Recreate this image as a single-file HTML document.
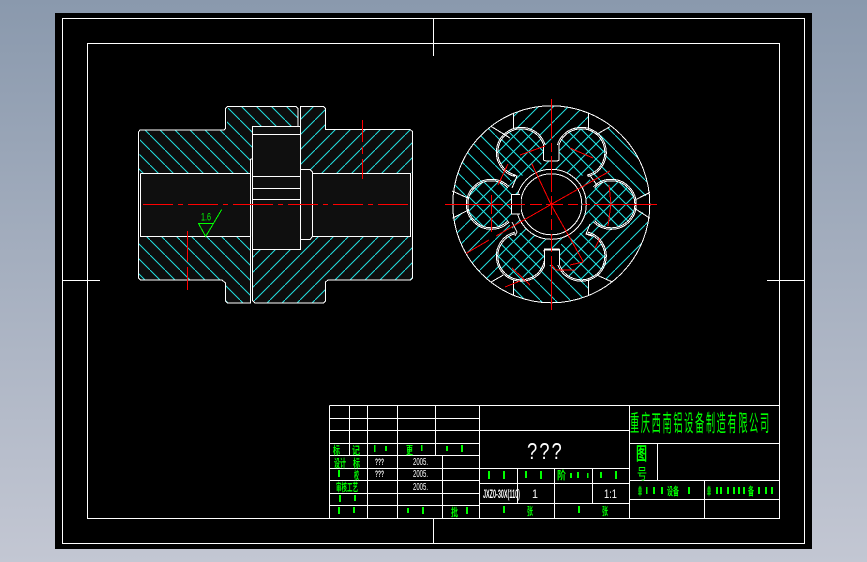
<!DOCTYPE html>
<html><head><meta charset="utf-8"><style>
html,body{margin:0;padding:0;width:867px;height:562px;overflow:hidden;background:linear-gradient(180deg,#8a99ad 0%,#c3c7d3 100%)}
svg{position:absolute;left:0;top:0}
text{font-family:"Liberation Sans","Noto Sans CJK SC",sans-serif}
</style></head><body>
<svg width="867" height="562" viewBox="0 0 867 562" xmlns="http://www.w3.org/2000/svg">
<defs>
<pattern id="b" width="15" height="15" patternUnits="userSpaceOnUse"><path d="M-1 -1L16 16" stroke="#22e0e0" stroke-width="1" fill="none"/></pattern>
<pattern id="f" width="15" height="15" patternUnits="userSpaceOnUse"><path d="M-1 16L16 -1" stroke="#22e0e0" stroke-width="1" fill="none"/></pattern>
<pattern id="cb" width="15" height="15" patternUnits="userSpaceOnUse" x="551" y="204"><path d="M-1 -1L16 16" stroke="#22e6e6" stroke-width="1" fill="none"/></pattern>
<pattern id="cf" width="15" height="15" patternUnits="userSpaceOnUse" x="551" y="204"><path d="M-1 16L16 -1" stroke="#22e6e6" stroke-width="1" fill="none"/></pattern>
<clipPath id="disc"><circle cx="551.3" cy="204.3" r="98.5"/></clipPath>
<g id="lobearc" fill="none" stroke="#fff" stroke-width="1"><path d="M593.6 186.6A25 25 0 1 1 593.600 222M594.700 187.700A23.500 23.500 0 1 1 594.700 220.900"/></g>
</defs>
<rect x="55" y="13" width="757" height="536" fill="#000"/>
<g shape-rendering="crispEdges" fill="none" stroke="#fff" stroke-width="1">
<rect x="62.5" y="18.5" width="742" height="525"/>
<rect x="87.5" y="43.5" width="692" height="475"/>
<path d="M433.5 18V56M433.5 518V544M62 280.5H100M767 280.5H805"/>
</g>

<!-- section view -->
<g shape-rendering="crispEdges">
<path d="M140 173.5H411V236.5H140Z" fill="#0f0f0f"/>
<path d="M253 127H300V249H253Z" fill="#0f0f0f"/>
<path d="M300 169.5H312.5V239.5H300Z" fill="#0f0f0f"/>
<g fill="#0d0d0d" stroke="none">
<path d="M140 131L141 130H225L227 128V109L229 107H296L298 109V127H253V159H250.5V173H139Z"/>
<path d="M300.5 107H323L325.5 109V128L327 130H410L412.5 132V173H313V172L310 169.5H300.5Z"/>
<path d="M139 236.5H250.5V303H228L225.5 301V283L222 280H141L139 278Z"/>
<path d="M253 249.5H300.5V239.5H310L313 236.5H412.5V278L410 280H327L325.5 282V301L323 303H256L253 300Z"/>
</g>
<g stroke="none">
<path d="M140 131L141 130H225L227 128V109L229 107H296L298 109V127H253V159H250.5V173H139Z" fill="url(#b)"/>
<path d="M300.5 107H323L325.5 109V128L327 130H410L412.5 132V173H313V172L310 169.5H300.5Z" fill="url(#f)"/>
<path d="M139 236.5H250.5V303H228L225.5 301V283L222 280H141L139 278Z" fill="url(#b)"/>
<path d="M253 249.5H300.5V239.5H310L313 236.5H412.5V278L410 280H327L325.5 282V301L323 303H256L253 300Z" fill="url(#f)"/>
</g>
<g fill="none" stroke="#fff" stroke-width="1">
<path d="M138.5 132L140 130H224L225.5 128.5V108.5L227.5 106.5H296L298 108.5V126.5"/>
<path d="M300.5 239.5V106.5H323.500L325.500 108.500V129.500H410L412.500 131.500V278L410.500 280H328L325.500 282V301L323.500 303H255L252.500 300.500V126.500H300.500"/>
<path d="M138.500 132V278L140.500 280H222L225.500 283V301L227.500 303H250.500V159"/>
<path d="M140.500 173.500H250.500M312.500 173.500H410.500V236.500H312.500M250.500 236.500H140.500V173.500M252.500 134.500H300.500M252.500 176.500H300.500M252.500 188.500H300.500M252.500 199.500H300.500M252.500 249.500H300.500V239.500H310L312.500 236.500V172L310 169.500H300.500M250.500 159H252.500"/>
</g>
<path d="M143 204.500H173M178 204.500H183M188 204.500H218M223 204.500H228M233 204.500H273M278 204.500H283M288 204.500H318M323 204.500H328M333 204.500H363M368 204.500H373M378 204.500H408M362.500 120V142M362.500 147V154M362.500 159V179M187.500 231V262M187.500 267V290" stroke="#f00" fill="none"/>
<path d="M198 223.500H213.500M198.500 223.500L205.700 236.500L221.700 209.500" stroke="#0f0" fill="none"/>
</g>
<text x="201" y="220.500" font-size="11" fill="#0f0" textLength="10" lengthAdjust="spacingAndGlyphs">1.6</text>

<!-- circular view -->
<g clip-path="url(#disc)" shape-rendering="crispEdges" stroke="none">
<path d="M513.300 100V130L551 204L588.300 130V100Z" fill="url(#f)"/>
<path d="M596.700 134.300L610 126.700L640 140L655 192.300L635 200L551 204Z" fill="url(#b)"/>
<path d="M635 208.600L655 218.300L645 260L611.700 281.700L596.700 275L551 204Z" fill="url(#f)"/>
<path d="M588.300 280V310H513.300V280L551 204Z" fill="url(#b)"/>
<path d="M491.700 281.700L503.300 275L551 204L468.300 210L448 218.300L455 260Z" fill="url(#f)"/>
<path d="M448 191L468.300 198.300L551 204L510 138L491.700 126.700L460 140Z" fill="url(#b)"/>
</g>
<g shape-rendering="crispEdges">
<circle cx="551.300" cy="204.300" r="46" fill="#000"/>
<circle cx="551.300" cy="204.300" r="46" fill="url(#cf)"/>
<g stroke="none">
<circle cx="491.300" cy="204.300" r="23.500" fill="#000"/><circle cx="491.300" cy="204.300" r="23.500" fill="url(#cb)"/><circle cx="491.300" cy="204.300" r="23.500" fill="url(#cf)"/>
<circle cx="611.300" cy="204.300" r="23.500" fill="#000"/><circle cx="611.300" cy="204.300" r="23.500" fill="url(#cb)"/><circle cx="611.300" cy="204.300" r="23.500" fill="url(#cf)"/>
<circle cx="521.300" cy="152.300" r="23.500" fill="#000"/><circle cx="521.300" cy="152.300" r="23.500" fill="url(#cb)"/><circle cx="521.300" cy="152.300" r="23.500" fill="url(#cf)"/>
<circle cx="581.300" cy="152.300" r="23.500" fill="#000"/><circle cx="581.300" cy="152.300" r="23.500" fill="url(#cb)"/><circle cx="581.300" cy="152.300" r="23.500" fill="url(#cf)"/>
<circle cx="521.300" cy="256.300" r="23.500" fill="#000"/><circle cx="521.300" cy="256.300" r="23.500" fill="url(#cb)"/><circle cx="521.300" cy="256.300" r="23.500" fill="url(#cf)"/>
<circle cx="581.300" cy="256.300" r="23.500" fill="#000"/><circle cx="581.300" cy="256.300" r="23.500" fill="url(#cb)"/><circle cx="581.300" cy="256.300" r="23.500" fill="url(#cf)"/>
</g>
<use href="#lobearc"/>
<use href="#lobearc" transform="rotate(60 551.3 204.3)"/>
<use href="#lobearc" transform="rotate(120 551.3 204.3)"/>
<use href="#lobearc" transform="rotate(180 551.3 204.3)"/>
<use href="#lobearc" transform="rotate(240 551.3 204.3)"/>
<use href="#lobearc" transform="rotate(300 551.3 204.3)"/>
<g fill="none" stroke="#fff" stroke-width="1">
<circle cx="551.300" cy="204.300" r="98.500"/>
<path d="M513.300 113V129M588.300 113V130M513.300 295V280M588.300 295V280M491.700 126.700L510 138M610 126.700L596.700 134.300M452.300 191L468.300 198.300M650 192.300L635 200M452.300 218.300L468.300 210M650 218.300L635 208.600M491.700 281.700L503.300 275M611.700 281.700L596.700 275"/>
<path d="M543.500 145V160L546 161H557.500L559 160V145" fill="#000"/>
<path d="M544.500 265V249.500H559.500V265" fill="#000"/>
<path d="M513 175L517 176L512 188M587 175L591 177L597 185M512 222L517 232L515 236M590 224L586 234L592 236"/>
<circle cx="551.300" cy="204.300" r="35" fill="#000"/>
<circle cx="551.300" cy="204.300" r="30.500"/>
<path d="M520 194.500H511.500V214H520" fill="#000"/>
<path d="M520 197V211" stroke="#000" stroke-width="2"/>
</g>
<path d="M544 249.500H559.500" stroke="#fff" stroke-width="2" fill="none"/>
<g fill="none" stroke="#f00" stroke-width="1">
<path d="M551.500 99V139M551.500 143V152M551.500 156V192M551.500 196V215M551.500 219V230M551.500 234V252M551.500 256V310M445 204.500H503M507 204.500H525M530 204.500H542M546 204.500H563M568 204.500H578M583 204.500H590M594 204.500H657"/>
<path d="M466 253.500L489 240M496 236L551 204.500L610 171M531.700 163.500L551 204.500L583.300 261.700"/>
<path d="M491.500 195V214M491.500 218V232M508 164L498 185M520 155L545 146M570 148L593 158M609 185L611 204L608 226M600 238L595 248M570 265L583 262M512 268L530 285M505 287L520 281M552 265L556 270H575"/>
</g>
</g>

<!-- title block -->
<g shape-rendering="crispEdges" fill="none" stroke="#fff" stroke-width="1">
<path d="M329.500 405.500H779.500M329.500 405.500V518M329.500 418.500H479.500M329.500 430.500H479.500M329.500 443.500H479.500M329.500 455.500H479.500M329.500 468.500H479.500M329.500 480.500H479.500M329.500 493.500H479.500M329.500 505.500H479.500"/>
<path d="M349.500 405.500V455.500M367.500 405.500V518M397.500 405.500V518M435.500 405.500V455.500M442.500 455.500V518M479.500 405.500V518"/>
<path d="M479.500 430.500H629.500M479.500 468.500H629.500M479.500 483.500H629.500M479.500 503.500H629.500M517.500 468.500V503.500M554.500 468.500V518M592.500 468.500V503.500M629.500 405.500V518M629.500 443.500H779.500M657.500 443.500V480.500M629.500 480.500H779.500M629.500 499.500H779.500M704.500 480.500V518"/>
</g>
<g fill="#0f0">
<text transform="translate(630 431) scale(.4 1)" font-size="23" letter-spacing="4.1">重庆西南铝设备制造有限公司</text>
<text x="636" y="460" font-size="18" textLength="11" lengthAdjust="spacingAndGlyphs" font-weight="700">图</text>
<text x="637" y="479" font-size="15" textLength="10" lengthAdjust="spacingAndGlyphs">号</text>
<g font-size="11" font-weight="700">
<text x="333" y="454" textLength="7" lengthAdjust="spacingAndGlyphs">标</text><text x="352" y="454" textLength="8" lengthAdjust="spacingAndGlyphs">记</text>
<text x="406" y="454" textLength="7" lengthAdjust="spacingAndGlyphs">更</text>
<text x="334" y="467" textLength="12" lengthAdjust="spacingAndGlyphs">设计</text><text x="353" y="467" textLength="7" lengthAdjust="spacingAndGlyphs">标</text>
<text x="354" y="479" textLength="5" lengthAdjust="spacingAndGlyphs">校</text>
<text x="336" y="491" textLength="22" lengthAdjust="spacingAndGlyphs">审核工艺</text>
<text x="451" y="516" textLength="7" lengthAdjust="spacingAndGlyphs">批</text>
<text x="557" y="479" textLength="9" lengthAdjust="spacingAndGlyphs">阶</text>
<text x="527" y="515" textLength="6" lengthAdjust="spacingAndGlyphs">张</text><text x="602" y="515" textLength="6" lengthAdjust="spacingAndGlyphs">张</text>
<text x="638" y="495" textLength="4" lengthAdjust="spacingAndGlyphs">单</text>
<text x="667" y="495" textLength="12" lengthAdjust="spacingAndGlyphs">设备</text>
<text x="707" y="495" textLength="4" lengthAdjust="spacingAndGlyphs">单</text>
<text x="748" y="495" textLength="6" lengthAdjust="spacingAndGlyphs">备</text>
</g>
<g stroke="none">
<rect x="374" y="445" width="1.500" height="7"/><rect x="385" y="446" width="2" height="5"/><rect x="421" y="445" width="1.500" height="6"/><rect x="446" y="446" width="2" height="5"/><rect x="461" y="445" width="2" height="7"/>
<rect x="338" y="470" width="2" height="7"/><rect x="339" y="495" width="2" height="7"/><rect x="354" y="495" width="2" height="6"/>
<rect x="338" y="507" width="2" height="7"/><rect x="353" y="507" width="2" height="6"/><rect x="407" y="508" width="2" height="5"/><rect x="422" y="507" width="2" height="7"/><rect x="466" y="507" width="2" height="7"/>
<rect x="488" y="471" width="2" height="8"/><rect x="503" y="471" width="2" height="8"/><rect x="525" y="471" width="2" height="7"/><rect x="540" y="471" width="2" height="8"/><rect x="570" y="473" width="2" height="5"/><rect x="577" y="472" width="2" height="6"/><rect x="587" y="473" width="1.500" height="5"/><rect x="600" y="472" width="2" height="6"/><rect x="615" y="471" width="2" height="8"/>
<rect x="503" y="506" width="2" height="7"/><rect x="578" y="506" width="2" height="7"/>
<rect x="646" y="487" width="1.500" height="7"/><rect x="653" y="487" width="2" height="7"/><rect x="661" y="487" width="2" height="7"/><rect x="688" y="487" width="2" height="7"/>
<rect x="716" y="487" width="2" height="7"/><rect x="720" y="487" width="2" height="7"/><rect x="727" y="487" width="2" height="7"/><rect x="733" y="487" width="2" height="7"/><rect x="738" y="487" width="2" height="7"/><rect x="743" y="487" width="2" height="7"/><rect x="758" y="487" width="2" height="7"/><rect x="765" y="487" width="2" height="7"/><rect x="771" y="487" width="2" height="7"/>
</g>
</g>
<g fill="#fff">
<text transform="translate(527 459) scale(.8 1)" font-size="23" letter-spacing="2.5">???</text>
<text x="375" y="465" font-size="9" font-weight="700" textLength="9" lengthAdjust="spacingAndGlyphs">???</text>
<text x="375" y="477" font-size="9" font-weight="700" textLength="9" lengthAdjust="spacingAndGlyphs">???</text>
<text x="413" y="465" font-size="10" textLength="15" lengthAdjust="spacingAndGlyphs">2005.</text>
<text x="413" y="477" font-size="10" textLength="15" lengthAdjust="spacingAndGlyphs">2005.</text>
<text x="413" y="490" font-size="10" textLength="15" lengthAdjust="spacingAndGlyphs">2005.</text>
<text x="483" y="498" font-size="12" font-weight="700" textLength="37" lengthAdjust="spacingAndGlyphs">JXZ0-30X(110)</text>
<text x="532" y="498" font-size="12" textLength="6" lengthAdjust="spacingAndGlyphs">1</text>
<text x="604" y="498" font-size="12" textLength="13" lengthAdjust="spacingAndGlyphs">1:1</text>
</g>
</svg>
</body></html>
